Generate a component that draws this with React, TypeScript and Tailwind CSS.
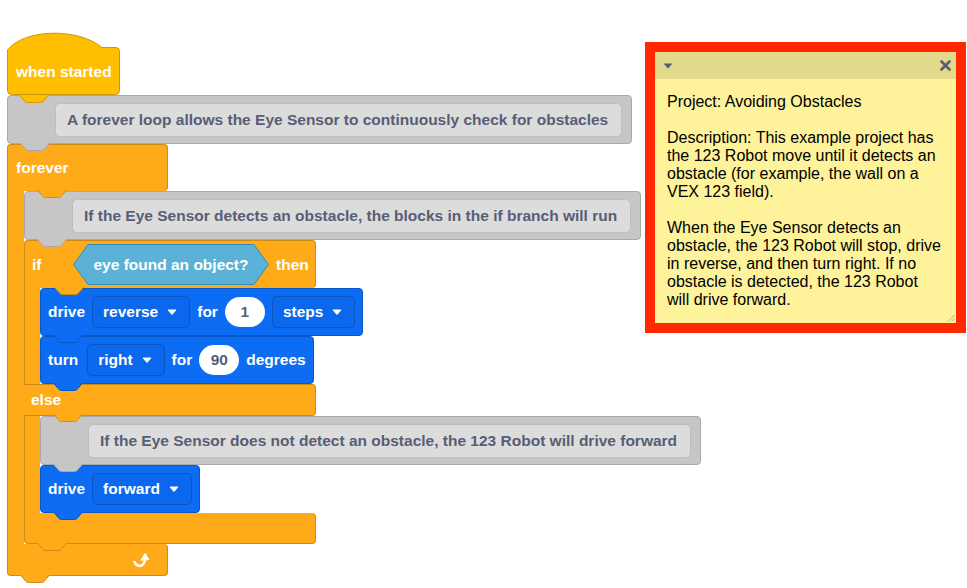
import React from 'react';

type TabProps = { fill: string; stroke: string; inner?: boolean };

// notch tab that sticks down into the block below
const Tab = ({ fill, stroke, inner }: TabProps) => (
  <svg
    width="30"
    height="8"
    viewBox="0 0 30 8"
    className={inner ? 'absolute bottom-[-7px] left-[29px] z-10' : 'absolute bottom-[-8px] left-[12px] z-10'}
  >
    <path d="M0 0 L6 6.5 Q7 7.5 8.5 7.5 L21.5 7.5 Q23 7.5 24 6.5 L30 0 Z" fill={fill} />
    <path d="M0.5 0 L6 6.5 Q7 7.5 8.5 7.5 L21.5 7.5 Q23 7.5 24 6.5 L29.5 0" fill="none" stroke={stroke} />
  </svg>
);

const Caret = () => (
  <svg width="10" height="6" viewBox="0 0 10 6">
    <path d="M1 1 L9 1 L5 5.5 Z" fill="#fff" stroke="#fff" strokeLinejoin="round" />
  </svg>
);

const Dropdown = ({ label }: { label: string }) => (
  <div className="flex h-[32px] items-center gap-[9px] rounded-[5px] border border-[#0a55c4] bg-[#0b67ec] pl-[10px] pr-[12px]">
    <span>{label}</span>
    <Caret />
  </div>
);

const Oval = ({ value }: { value: string }) => (
  <div className="flex h-[30px] w-[40px] items-center justify-center rounded-full bg-white text-[#575e75]">{value}</div>
);

const Comment = ({ text }: { text: string }) => (
  <div className="relative flex h-[49px] items-center rounded-[4px] border border-[#a9a9a9] bg-[#c6c6c6] pl-[47px] pr-[9px]">
    <div className="flex h-[34px] items-center whitespace-nowrap rounded-[5px] border border-[#bdbdbd] bg-[#dcdcdc] pl-[11px] pr-[13px] text-[#575e75]">
      {text}
    </div>
    <Tab fill="#c6c6c6" stroke="#a9a9a9" />
  </div>
);

const Motion = ({ children }: { children: React.ReactNode }) => (
  <div className="relative flex h-[48px] items-center gap-[7px] whitespace-nowrap rounded-[4px] border border-[#0a56c4] bg-[#0c6cf4] pl-[7px] pr-[7px] text-white">
    {children}
    <Tab fill="#0c6cf4" stroke="#0a56c4" />
  </div>
);

const LoopArrow = () => (
  <svg width="18" height="18" viewBox="0 0 18 18">
    <path d="M2.5 11 Q5 16 9.5 14.5 Q12.5 13.2 12.8 8.5" fill="none" stroke="#fff" strokeWidth="2.6" strokeLinecap="round" />
    <path d="M8.8 9.2 L16.8 8.6 L13.2 2.2 Z" fill="#fff" stroke="#fff" strokeLinejoin="round" />
  </svg>
);

const noteLines = [
  'Project: Avoiding Obstacles',
  '',
  'Description: This example project has',
  'the 123 Robot move until it detects an',
  'obstacle (for example, the wall on a',
  'VEX 123 field).',
  '',
  'When the Eye Sensor detects an',
  'obstacle, the 123 Robot will stop, drive',
  'in reverse, and then turn right. If no',
  'obstacle is detected, the 123 Robot',
  'will drive forward.',
];

const App = () => {
  return (
    <div className="relative h-[588px] w-[967px] overflow-hidden bg-white font-['Liberation_Sans',Arial,sans-serif] text-[15.5px] font-bold">
      <div className="flex flex-col items-start pl-[7px] pt-[32px]">
        {/* when started */}
        <div className="relative h-[63px] w-[113px]">
          <svg width="113" height="63" viewBox="0 0 113 63" className="absolute inset-0">
            <path
              d="M0.5 18 C18 -4 72 -4 95 15.5 L109 15.5 Q112.5 15.5 112.5 19.5 L112.5 58.5 Q112.5 62.5 108.5 62.5 L4.5 62.5 Q0.5 62.5 0.5 58.5 Z"
              fill="#ffbf00"
              stroke="#cc9900"
            />
          </svg>
          <div className="relative flex h-full items-center pl-[9px] pt-[17px] text-white">when started</div>
          <Tab fill="#ffbf00" stroke="#cc9900" />
        </div>

        <Comment text="A forever loop allows the Eye Sensor to continuously check for obstacles" />

        {/* forever */}
        <div className="flex flex-col items-start">
          <div className="relative flex h-[47px] w-[161px] items-center rounded-t-[4px] rounded-br-[4px] border border-b-0 border-[#cf8b17] bg-[#ffab19] pl-[8px] text-white">
            forever
            <Tab fill="#ffab19" stroke="#cf8b17" inner />
          </div>
          <div className="flex">
            <div className="w-[17px] border-l border-[#cf8b17] bg-[#ffab19]" />
            <div className="flex flex-col items-start">
              <Comment text="If the Eye Sensor detects an obstacle, the blocks in the if branch will run" />

              {/* if / else */}
              <div className="flex flex-col items-start">
                <div className="relative flex h-[48px] w-[292px] items-center rounded-t-[4px] rounded-br-[4px] border border-b-0 border-[#cf8b17] bg-[#ffab19] pl-[7px] text-white">
                  <span className="w-[41px]">if</span>
                  <div className="relative flex h-[41px] w-[196px] items-center justify-center">
                    <svg width="196" height="41" viewBox="0 0 196 41" className="absolute inset-0">
                      <path d="M0.5 20.5 L15 0.5 L181 0.5 L195.5 20.5 L181 40.5 L15 40.5 Z" fill="#5cb1d6" stroke="#2e8eb8" />
                    </svg>
                    <span className="relative">eye found an object?</span>
                  </div>
                  <span className="ml-[7px]">then</span>
                  <Tab fill="#ffab19" stroke="#cf8b17" inner />
                </div>
                <div className="flex">
                  <div className="w-[16px] border-l border-[#cf8b17] bg-[#ffab19]" />
                  <div className="flex flex-col items-start">
                    <Motion>
                      <span>drive</span>
                      <Dropdown label="reverse" />
                      <span>for</span>
                      <Oval value="1" />
                      <Dropdown label="steps" />
                    </Motion>
                    <Motion>
                      <span className="mr-[2px]">turn</span>
                      <Dropdown label="right" />
                      <span>for</span>
                      <Oval value="90" />
                      <span>degrees</span>
                    </Motion>
                  </div>
                </div>
                <div className="relative flex h-[32px] w-[292px] items-center rounded-r-[4px] border-y border-r border-[#cf8b17] bg-[#ffab19] pl-[7px] text-white">
                  else
                  <Tab fill="#ffab19" stroke="#cf8b17" inner />
                </div>
                <div className="flex">
                  <div className="w-[16px] border-l border-[#cf8b17] bg-[#ffab19]" />
                  <div className="flex flex-col items-start">
                    <Comment text="If the Eye Sensor does not detect an obstacle, the 123 Robot will drive forward" />
                    <Motion>
                      <span>drive</span>
                      <Dropdown label="forward" />
                    </Motion>
                  </div>
                </div>
                <div className="relative h-[31px] w-[292px] rounded-b-[4px] rounded-tr-[4px] border border-t-0 border-[#cf8b17] bg-[#ffab19]">
                  <Tab fill="#ffab19" stroke="#cf8b17" />
                </div>
              </div>
            </div>
          </div>
          <div className="relative flex h-[32px] w-[161px] items-center justify-end rounded-b-[4px] rounded-tr-[4px] border border-t-0 border-[#cf8b17] bg-[#ffab19] pr-[17px]">
            <LoopArrow />
            <Tab fill="#ffab19" stroke="#cf8b17" />
          </div>
        </div>
      </div>

      {/* workspace note */}
      <div className="absolute left-[645px] top-[42px] flex h-[291px] w-[321px] flex-col border-[10px] border-[#ff2800] font-normal">
        <div className="flex h-[27px] items-center justify-between bg-[#e2d98a] pl-[8px] pr-[5px]">
          <svg width="10" height="6" viewBox="0 0 10 6">
            <path d="M0.5 0.5 L9.5 0.5 L5 5.5 Z" fill="#575e75" />
          </svg>
          <svg width="11" height="11" viewBox="0 0 11 11">
            <path d="M1.5 1.5 L9.5 9.5 M9.5 1.5 L1.5 9.5" stroke="#575e75" strokeWidth="2.6" strokeLinecap="round" />
          </svg>
        </div>
        <div className="relative flex-1 bg-[#fef29b] pl-[12px] pt-[14px] text-[16px] leading-[18px] text-black">
          {noteLines.map((line, i) => (
            <div key={i} className="h-[18px] whitespace-nowrap">{line}</div>
          ))}
          <svg width="8" height="8" viewBox="0 0 8 8" className="absolute bottom-[1px] right-[1px]">
            <path d="M7.5 1 L1 7.5 M7.5 4.5 L4.5 7.5" stroke="#9a9a8a" strokeWidth="0.8" />
          </svg>
        </div>
      </div>
    </div>
  );
};

export default App;
